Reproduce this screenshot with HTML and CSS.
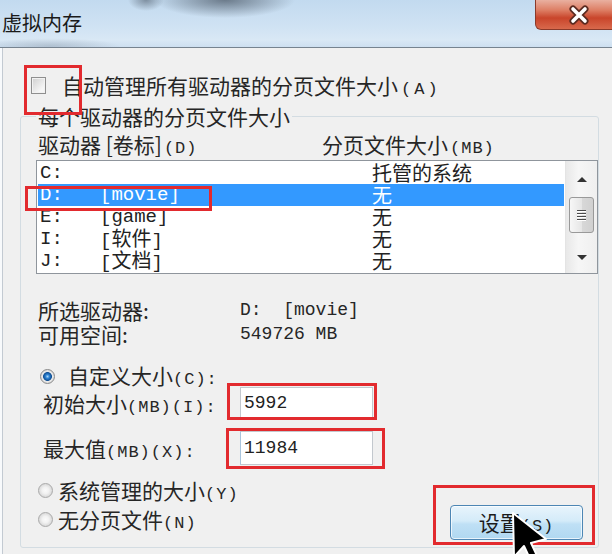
FILE: index.html
```html
<!DOCTYPE html>
<html lang="zh-CN">

<head>
    <meta charset="UTF-8">
    <meta name="viewport" content="width=device-width, initial-scale=1.0">
    <title>虚拟内存</title>
    <link rel="stylesheet" href="styles.css">
</head>

<body>
    <div class="window">
        <div class="titlebar">
            <span class="title">虚拟内存</span>
            <div class="close">
                <svg width="30" height="20" viewBox="0 0 30 20">
                    <path d="M9,4 L21,16 M21,4 L9,16" stroke="#5a2a20" stroke-width="7" stroke-linecap="round" />
                    <path d="M9,4 L21,16 M21,4 L9,16" stroke="#ffffff" stroke-width="3.6" stroke-linecap="round" />
                </svg>
            </div>
        </div>

        <div class="content">
            <div class="check-row">
                <span class="checkbox"></span>
                <span>自动管理所有驱动器的分页文件大小<span class="key wide">(A)</span></span>
            </div>

            <fieldset class="group">
                <legend>每个驱动器的分页文件大小</legend>

                <div class="list-head">
                    <span>驱动器 [卷标]<span class="key">(D)</span></span>
                    <span>分页文件大小<span class="key">(MB)</span></span>
                </div>

                <div class="listbox">
                    <div class="rows">
                        <div class="row"><span>C:</span><span></span><span class="size">托管的系统</span></div>
                        <div class="row selected"><span>D:</span><span>[movie]</span><span class="size">无</span></div>
                        <div class="row"><span>E:</span><span>[game]</span><span class="size">无</span></div>
                        <div class="row"><span>I:</span><span>[<span class="cn">软件</span>]</span><span class="size">无</span></div>
                        <div class="row"><span>J:</span><span>[<span class="cn">文档</span>]</span><span class="size">无</span></div>
                    </div>
                    <div class="scrollbar">
                        <div class="arrow up"></div>
                        <div class="thumb"><i></i><i></i><i></i><i></i></div>
                        <div class="arrow down"></div>
                    </div>
                </div>

                <div class="info">
                    <span class="label">所选驱动器:</span><span class="value">D:  [movie]</span>
                    <span class="label">可用空间:</span><span class="value">549726 MB</span>
                </div>

                <div class="radio-row">
                    <span class="radio on"></span>
                    <span>自定义大小<span class="key">(C):</span></span>
                </div>

                <div class="size-row">
                    <span class="label">初始大小<span class="key">(MB)(I):</span></span>
                    <div class="input">5992</div>
                </div>
                <div class="size-row second">
                    <span class="label">最大值<span class="key">(MB)(X):</span></span>
                    <div class="input">11984</div>
                </div>

                <div class="bottom">
                    <div class="radios">
                        <div><span class="radio"></span><span>系统管理的大小<span class="key">(Y)</span></span></div>
                        <div><span class="radio"></span><span>无分页文件<span class="key">(N)</span></span></div>
                    </div>
                    <button class="set-btn">设置<span class="key">(S)</span></button>
                </div>
            </fieldset>
        </div>

        <!-- red highlight marks -->
        <div class="mark mark-check"></div>
        <div class="mark mark-drive"></div>
        <div class="mark mark-init"></div>
        <div class="mark mark-max"></div>
        <div class="mark mark-set"></div>

        <svg class="cursor" viewBox="0 0 40 60">
            <polygon points="1,1 2,45 12,34 20,51 27,48 19,31 34,27" fill="#000" stroke="#fff" stroke-width="2"
                stroke-linejoin="round" />
        </svg>
    </div>
</body>

</html>
```

FILE: styles.css
```css
body {
    margin: 0;
    background-color: #f0f0f0;
    font-family: "Noto Sans CJK SC", sans-serif;
}

.window {
    position: relative;
    width: 612px;
    height: 554px;
    overflow: hidden;
    background-color: #f0f0f0;
    color: #262626;
    font-size: 21px;
}

/* title bar */
.titlebar {
    height: 47px;
    border-bottom: 1px solid #76838f;
    display: flex;
    justify-content: space-between;
    align-items: flex-start;
    background:
        radial-gradient(70px 18px at 225px 0, rgba(70, 82, 96, 0.7), rgba(70, 82, 96, 0)),
        radial-gradient(18px 11px at 146px 0, rgba(70, 82, 96, 0.55), rgba(70, 82, 96, 0)),
        radial-gradient(70px 8px at 50px 46px, rgba(120, 135, 150, 0.35), rgba(120, 135, 150, 0)),
        linear-gradient(#c2daef, #cfe2f3 55%, #d9e8f5 85%, #cddff0);
}

.title {
    margin: 9px 0 0 2px;
    font-size: 20px;
    line-height: 28px;
    color: #1a1a1a;
}

.close {
    width: 85px;
    height: 30px;
    margin-right: -8px;
    box-sizing: border-box;
    border: 1px solid #8a3a2a;
    border-top: none;
    border-radius: 0 0 0 6px;
    background: linear-gradient(#e9b0a0, #dd7e64 35%, #c9452b 62%, #d8694c);
    display: flex;
    align-items: center;
    padding-left: 28px;
}

/* body */
.content {
    padding: 25px 13px 6px 20px;
    box-shadow: inset 2px 0 0 #f8fafc, inset 3px 0 0 #c3cad2;
}

.check-row {
    display: flex;
    align-items: center;
    gap: 16px;
    height: 24px;
    line-height: 24px;
    margin-left: 11px;
}

.checkbox {
    width: 15px;
    height: 17px;
    box-sizing: border-box;
    border: 1px solid #8f8f8f;
    background: linear-gradient(135deg, #cfcfcf, #f6f6f6 75%);
    box-shadow: inset 0 0 0 1px #f2f2f2;
}

.key {
    font-family: "Liberation Mono", monospace;
    font-size: 17px;
    line-height: 1;
    letter-spacing: 1px;
}

.key.wide {
    margin-left: 3px;
    letter-spacing: 3px;
}

.group {
    margin: 7px 0 0;
    padding: 4px 0 7px 15px;
    border: 1px solid #d3dce2;
    border-radius: 3px;
    min-width: 0;
}

.group legend {
    padding: 0 2px;
    height: 24px;
    line-height: 24px;
}

.list-head {
    display: grid;
    grid-template-columns: 286px 1fr;
    height: 24px;
    line-height: 24px;
}

.list-head span:first-child {
    padding-left: 2px;
}

/* drive list */
.listbox {
    margin-top: 4px;
    height: 114px;
    box-sizing: border-box;
    display: flex;
    border: 1px solid #8f959c;
    background-color: #fff;
}

.rows {
    flex: 1;
    padding: 1px 1px 0;
}

.row {
    display: grid;
    grid-template-columns: 60px 272px 1fr;
    height: 22px;
    line-height: 22px;
    padding-left: 2px;
    font-family: "Liberation Mono", "Noto Sans CJK SC", monospace;
    font-size: 19px;
    color: #222;
}

.row > span {
    height: 22px;
}

.row.selected {
    background-color: #3399ff;
    color: #fff;
}

.row .cn {
    font-family: "Noto Sans CJK SC", sans-serif;
    font-size: 20px;
    line-height: 1;
}

.row .size {
    font-family: "Noto Sans CJK SC", sans-serif;
    font-size: 20px;
}

.scrollbar {
    width: 31px;
    display: flex;
    flex-direction: column;
    align-items: center;
    border-left: 1px solid #e4e4e4;
    background: linear-gradient(90deg, #e8e8e8, #f6f6f6 40%, #efefef);
}

.arrow {
    width: 0;
    height: 0;
    border-left: 5px solid transparent;
    border-right: 5px solid transparent;
}

.arrow.up {
    margin-top: 16px;
    border-bottom: 5px solid #333;
}

.arrow.down {
    margin-top: 22px;
    border-top: 5px solid #333;
}

.thumb {
    margin-top: 15px;
    width: 25px;
    height: 36px;
    box-sizing: border-box;
    border: 1px solid #999;
    border-radius: 3px;
    background: linear-gradient(90deg, #f7f7f7, #e6e6e6 50%, #d8d8d8 52%, #d0d0d0);
    display: flex;
    flex-direction: column;
    align-items: center;
    justify-content: center;
    gap: 2px;
}

.thumb i {
    width: 9px;
    height: 1px;
    background-color: #4a4a4a;
    box-shadow: 0 1px 0 #fff;
}

/* selected drive info */
.info {
    margin-top: 24px;
    display: grid;
    grid-template-columns: 204px 1fr;
    grid-auto-rows: 24px;
    line-height: 24px;
}

.info .label {
    padding-left: 2px;
}

.info .value {
    font-family: "Liberation Mono", monospace;
    font-size: 18px;
    white-space: pre;
}

.radio-row {
    margin-top: 19px;
    height: 22px;
    display: flex;
    align-items: center;
    gap: 13px;
    padding-left: 4px;
    line-height: 22px;
}

.radio {
    width: 15px;
    height: 15px;
    flex: none;
    box-sizing: border-box;
    border-radius: 50%;
    border: 1px solid #aaa;
    background: radial-gradient(circle, #fafafa 0, #f2f2f2 35%, #d4d4d4 80%);
}

.radio.on {
    border-color: #8a8a8a;
    background: radial-gradient(circle, #a8d6f7 0, #2a7fd0 22%, #0f4f93 44%, #eaeaea 52%, #cfcfcf 90%);
}

.size-row {
    display: grid;
    grid-template-columns: 204px 133px;
    align-items: center;
    height: 32px;
}

.size-row .label {
    padding-left: 7px;
    line-height: 24px;
}

.input {
    height: 32px;
    box-sizing: border-box;
    border: 1px solid #c3c8ce;
    background-color: #fff;
    padding-left: 3px;
    font-family: "Liberation Mono", monospace;
    font-size: 18px;
    line-height: 30px;
    color: #222;
}

.size-row.second {
    margin-top: 12px;
    height: 34px;
}

.size-row.second .input {
    height: 34px;
    line-height: 32px;
    border-left-color: #a9c4dc;
}

.bottom {
    margin-top: 13px;
    display: flex;
    justify-content: space-between;
    align-items: flex-end;
    height: 62px;
}

.radios {
    display: flex;
    flex-direction: column;
    gap: 5px;
    margin-bottom: 9px;
    padding-left: 2px;
}

.radios div {
    display: flex;
    align-items: center;
    gap: 5px;
    height: 24px;
    line-height: 24px;
}

.set-btn {
    width: 133px;
    height: 35px;
    margin-right: 15px;
    padding: 0;
    border: 1px solid #4d86b4;
    border-radius: 4px;
    background: linear-gradient(#e8f4fc, #d4ebf9 45%, #bfe0f5 55%, #b0d8f1);
    box-shadow: inset 0 0 0 1px rgba(255, 255, 255, 0.7);
    font-family: "Noto Sans CJK SC", sans-serif;
    font-size: 21px;
    line-height: 33px;
    color: #1b1b1b;
}

/* annotation overlays */
.mark {
    position: absolute;
    box-sizing: border-box;
    border: 3px solid #e22a2e;
}

.mark-check {
    left: 24px;
    top: 65px;
    width: 58px;
    height: 50px;
}

.mark-drive {
    left: 25px;
    top: 186px;
    width: 187px;
    height: 25px;
}

.mark-init {
    left: 227px;
    top: 383px;
    width: 150px;
    height: 37px;
}

.mark-max {
    left: 226px;
    top: 428px;
    width: 159px;
    height: 41px;
}

.mark-set {
    left: 433px;
    top: 485px;
    width: 162px;
    height: 60px;
}

.cursor {
    position: absolute;
    left: 512px;
    top: 512px;
    width: 40px;
    height: 60px;
}
```
